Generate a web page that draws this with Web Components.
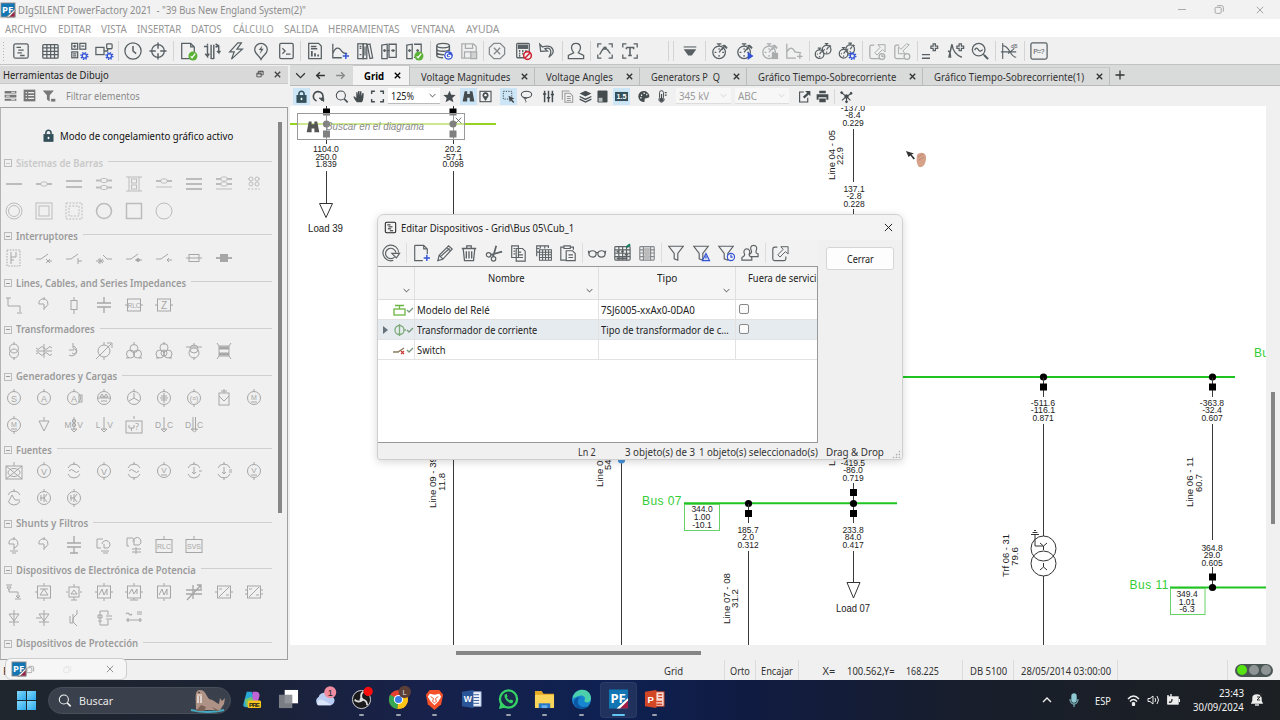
<!DOCTYPE html>
<html lang="es">
<head>
<meta charset="utf-8">
<title>DIgSILENT PowerFactory 2021</title>
<style>
html, body { margin: 0; height: 100%; overflow: hidden; }
body { font-family: "Noto Sans", "Open Sans", sans-serif; font-size: 11px; color: #222; }
</style>
</head>
<body>
<pf-window></pf-window>
<script>
const BLUE = "#3354d6";
const GREEN = "#5cb236";
const RED = "#cf2334";

const gear = `<circle cx="16" cy="15.500" r="2.400" stroke="${BLUE}" stroke-width="1.500"/><circle cx="16" cy="15.500" r="3.800" stroke="${BLUE}" stroke-width="1.500" stroke-dasharray="1.500 1.480"/>`;
const okBadge = `<circle cx="15.500" cy="15.500" r="5" fill="${GREEN}" stroke="none"/><path d="M13 16l1.500 1.500 3.500-4.500" stroke="#fff" stroke-width="1.400"/>`;
const plusBlue = `<path d="M16.500 12v7M13 15.500h7" stroke="${BLUE}" stroke-width="1.600"/>`;
const stopwatch = `<circle cx="9" cy="11.500" r="7"/><path d="M9 4.500V2M6.500 2h5M9 11.500l3-4M9 7v1.500M9 14.500v2M4 11.500h2M12.500 11.500h2"/><path d="M10.500 3.500c3 0 5 2 6.500 4.500l1.500-2-3-3z" fill="currentColor" stroke="none"/><path d="M12 8.500l3.500-4.500" stroke-width="1.800"/>`;
const miniWatch = (x, y) => `<circle cx="${x}" cy="${y}" r="4.800"/><path d="M${x} ${y}l2.200-3M${x} ${y - 4.8}v-1.800M${x - 2} ${y - 6.8}h4M${x + 3} ${y - 5}l2 1.500M${x - 3} ${y}h1M${x} ${y + 2}v1.500"/>`;
const table = `<rect x="2" y="3" width="17" height="15" rx="1"/><path d="M2 6.500h17M2 10.300h17M2 14h17M6.500 3v15M10.700 3v15M15 3v15"/>`;
const exportArrow = `<path d="M7 3.500H4Q2 3.500 2 6v10.500q0 2 2 2h10.500q2 0 2-2V14"/><path d="M7.500 12l6-6-2.500-3h8v8l-3-2.500-6 6z" stroke-width="1.100"/>`;
const funnel = `<path d="M2 2.500h16L12 10.500v7.500l-4-1.500v-6z"/>`;
const pfLogo = `<rect width="20" height="20" fill="#1276b4"/><path d="M20 10v10H9z" fill="#a01c46"/><path d="M20 9v2.500L11.500 20H8z" fill="#fff"/><text x="9.600" y="13.700" font-size="13" font-weight="700" fill="#fff" stroke="none" text-anchor="middle" textLength="16" lengthAdjust="spacingAndGlyphs" font-family="Noto Sans">PF</text>`;

// 20x20 drawings
const ICONS = {
  pf: pfLogo,
  form: `<rect x="2" y="2" width="16" height="16" rx="2"/><path d="M5 6h5M7 9h6M6 12h5M9 15h5" stroke-width="1.500"/>`,
  table,
  calcgear: `<rect x="2" y="1.500" width="6.500" height="6.500"/><rect x="11" y="1.500" width="6.500" height="6.500"/><rect x="2" y="11" width="6.500" height="6.500"/><path d="M3.500 4.700h3.500M5.200 3v3.500M12.500 4.700h3.500M3.500 13.300h3.500M3.500 15.300h3.500"/>${gear}`,
  shapegear: `<rect x="1" y="6" width="9" height="8"/><rect x="13" y="2" width="6" height="5.500" rx="1"/><path d="M10 10h4v-2.500"/>${gear}`,
  clock: `<circle cx="10" cy="10" r="9"/><path d="M10 4.500V10l3.500 3" stroke-width="1.700"/>`,
  target: `<circle cx="10" cy="10" r="7"/><path d="M10 .500v7M10 12.500v7M.500 10h7M12.500 10h7" stroke-width="1.600"/>`,
  doccheck: `<path d="M3 1.500h10l4 4V18.500H3zM13 1.500v4h4"/>${okBadge}`,
  arrows: `<path d="M1 5h4v11l-2.500-3M5 16l2-3M9 3v16M12 3v16M9 18.500h3M14 5h3.500v7l-2-2M17.500 12l2-2M5 4v-2M14 2l3 2-3 2" stroke-width="1.600"/>`,
  bolt: `<path d="M12 1L3 11h5l-3 8L17 8h-6l5-7z"/>`,
  bulb: `<path d="M10 19.500C8 15 3 13 3 8.500a7 7 0 0 1 14 0C17 13 12 15 10 19.500z"/><path d="M11.500 4l-4 5h2.500l-1.500 4.500 4.500-6h-2.500z" fill="currentColor" stroke="none"/>`,
  terminal: `<rect x="3" y="1.500" width="15" height="17" rx="1.500"/><path d="M6 7l3 3-3 3M10 13.500h5"/>`,
  report: `<path d="M3 1.500h11l3 3v14H3z"/><path d="M5.500 5h6M5.500 7.500h7" /><path d="M6.500 16v-6M10 16v-3.500M13.500 16v-2" stroke-width="2"/>`,
  chartplus: `<path d="M2 2v15.500h10M2 13C5 5 9 6 11 9s4 4 7 4"/>${plusBlue}`,
  books: `<rect x="2" y="2" width="6" height="16.500"/><rect x="8" y="2" width="4" height="16.500"/><path d="M12.500 3l3-.800 3 15.500-3 .700zM4 5h2M4 7h2M4 14h2M10 5v10"/>`,
  compare: `<path d="M2 3.500l6-1v16H2zM10 2.500h8V17h-8zM8 9.500h3M5 8v3M14.500 8v3" /><path d="M3.500 9.500H7M12.500 9.500h4" stroke-width="1.600"/>`,
  comparecheck: `<path d="M2 3.500l6-1v16H2zM10 2.500h8V17h-8M5 8v3M14 8v3"/><path d="M3.500 9.500H7M12.500 9.500h3" stroke-width="1.600"/>${okBadge}`,
  db: `<ellipse cx="9" cy="4" rx="7" ry="2.600"/><path d="M2 4v11c0 1.500 3 2.600 7 2.600M16 4v6M2 7.800c0 3.300 14 3.300 14 0M2 11.500c0 2 5 3 8 2.500" stroke-width="1.600"/><circle cx="15" cy="15" r="4.800" fill="${BLUE}" stroke="none"/><path d="M15 12.300a2.700 2.700 0 1 0 2.700 2.700M14.500 15h3" stroke="#fff"/>`,
  save: `<path d="M2 2h13l3 3v13H2zM6 2v5h8V2M5 18v-7h8"/><rect x="12" y="11" width="6.500" height="7.500" fill="#d2d2d2"/>`,
  xoct: `<path d="M6.500 1.500h7l5 5v7l-5 5h-7l-5-5v-7z"/><path d="M6.500 6.500l7 7M13.500 6.500l-7 7" stroke-width="1.500"/>`,
  calcno: `<rect x="3" y="1.500" width="14" height="16" rx="1"/><rect x="5" y="3.500" width="10" height="3.500" fill="currentColor"/><path d="M5.500 10h1.500M9 10h1.500M12.500 10h1.500M5.500 13h1.500M9 13h1.500M5.500 15.500h1.500" stroke-width="2"/><circle cx="15" cy="15" r="4.300" stroke="${RED}" stroke-width="1.700" fill="#f0f0f0"/><path d="M12 18l6-6" stroke="${RED}" stroke-width="1.700"/>`,
  undo: `<path d="M2 2.500l1 8 7.500-.500-3-2.500c6-3 9 3 4.500 9.500 9-6 4.500-15-7-11.500z"/>`,
  user: `<path d="M10 1.500c-3 0-5 2-5 5 0 2.500 1.300 4 2.500 5.500L1.500 15v3.500h17V15l-6-3C13.700 10.500 15 9 15 6.500c0-3-2-5-5-5z"/>`,
  framepoly: `<path d="M2 6V2h4M14 2h4v4M18 14v4h-4M6 18H2v-4"/><path d="M4 14l3.500-6L10 6l2.500 2.500L16 13" /><path d="M9 6h2v2H9zM7 9h1M13 9h1"/>`,
  frametext: `<path d="M2 6V2h4M14 2h4v4M18 14v4h-4M6 18H2v-4"/><path d="M6 6h8v2M6 6v2M10 6v9M8 15h4" stroke-width="1.700"/>`,
  dropdown: `<path d="M3 5.500h14" stroke-width="1.200"/><path d="M3 8h14l-5 7H8z" fill="currentColor" stroke="none"/>`,
  stopwatch,
  watchplay: `${stopwatch}<path d="M13 11l6.500 4.500L13 20z" fill="${BLUE}" stroke="none"/>`,
  watchstop: `${stopwatch}<rect x="12" y="12" width="7" height="7" fill="currentColor" stroke="none"/>`,
  chartgray: `<path d="M2 2v16h10M2 11c3-5 6-6 9 0l7 1M16.500 13v6M13.500 16h6"/>`,
  watches: `${miniWatch(6.2, 13.5)}${miniWatch(14, 8.5)}`,
  watchgear: `${miniWatch(6.2, 13)}${miniWatch(13.5, 8)}${gear}`,
  exportclock: `${exportArrow}<circle cx="15.500" cy="16" r="3.200" fill="#f0f0f0"/><path d="M15.500 14v2h2"/>`,
  importclock: `<path d="M7 3.500H4Q2 3.500 2 6v10.500q0 2 2 2h8"/><path d="M18 3l-7 7 2.500 3H6V5.500L9 8l6-6z" stroke-width="1.100"/><circle cx="15.500" cy="16" r="3.200" fill="#f0f0f0"/>`,
  eqplus: `<path d="M1 14h9M1 18h9" stroke-width="1.600"/><path d="M13.500 2H16v2.500h2.500V7H16v2.500h-2.500V7H11V4.500h2.500z"/>`,
  curveplus: `<path d="M2 17.500L5.500 2.500c1 7 4 12 11 14.500M1 10c3 0 3 4 3 7.500" stroke-width="1.600"/><path d="M13.500 2H16v2.500h2.500V7H16v2.500h-2.500V7H11V4.500h2.500z"/>`,
  magwave: `<circle cx="8.500" cy="8.500" r="7"/><path d="M4 9c2-4 3-2 4.500 0s3 1 4.500-.500M13.500 13.500l5 5"/><path d="M14.500 14.500l4.500 4.500" stroke-width="2.200"/>`,
  curve: `<path d="M3 1v18M1 11h17M3 4c8 0 8 13 15 13M9 13l7-6" stroke-width="1.200"/><text x="12" y="6.500" font-size="6" stroke="none" fill="currentColor" font-family="Noto Sans">dB</text>`,
  pq: `<rect x="1" y="1" width="18" height="18" rx="2"/><text x="10" y="13" font-size="8.500" text-anchor="middle" textLength="13" stroke="none" fill="currentColor" font-family="Liberation Mono">P=?</text>`,
  refresh: `<path d="M12.500 18.200a8.700 8.700 0 1 1 6-8.700M14 14.500a5.800 5.800 0 1 1 1.500-5"/><path d="M11 10.500h8.500L16 15.500z"/>`,
  newdoc: `<path d="M3 1.500h10l4 4V11M3 1.500v17h9M13 1.500v4h4"/>${plusBlue}`,
  pencil: `<path d="M2 18.500l1.500-6L14 2l4 3.500L7.500 17zM12 4l4 3.500M3.500 12.500l4 4M5 14L15 5"/>`,
  trash: `<path d="M2 5h16M7.500 5V2h5v3M3.500 5L5 18.500h10L16.500 5" stroke-width="1.400"/><path d="M7 8v8M10 8v8M13 8v8" stroke-width="1.500"/>`,
  cut: `<circle cx="4" cy="12" r="2.500"/><circle cx="9.500" cy="16.500" r="2.500"/><path d="M6.500 12L19 8.500M9 14L12.500 2" stroke-width="1.900"/>`,
  copy: `<path d="M3 2h7.500v13H3zM8 5h7l3 3v11H8z" fill="#f3f3f3"/><path d="M5 5h2M5 8h2M5 11h2M10.500 9h3M10.500 12h5M10.500 15h5"/>`,
  copytable: `<path d="M3 13.500V2h13v2.500M3 5h3M7 2v3M12 2v3M3 9h3"/><g transform="translate(4.500 4) scale(.78)"><path d="M2 3h17v15H2zM2 6.500h17M2 10.300h17M2 14h17M6.500 3v15M10.700 3v15M15 3v15" stroke-width="1.500"/></g>`,
  paste: `<path d="M8 18H2V3.500h3M13 3.500h3v3M5.500 2h7v3h-7zM8 7.500h7l3 3v8H8zM10.500 12h5M10.500 15h5"/>`,
  glasses: `<ellipse cx="5" cy="11" rx="4" ry="3.500"/><ellipse cx="15" cy="11" rx="4" ry="3.500"/><path d="M9 10c.700-.700 1.300-.700 2 0M1 10.500L.500 7.500M19 10.500l.500-3" stroke-width="1.600"/>`,
  tablegreen: `${table}<path d="M4 8.500h3M9 8.500h3M13 12h4M4 16h12" stroke-width="1.800"/><path d="M15 3.500l4-3" stroke="#168065" stroke-width="2.400"/>`,
  tablegray: `<rect x="2" y="3" width="16" height="15" rx="1"/><path d="M2 6.500h16M2 10h16M2 14h16M6 3v15M14 3v15"/><rect x="7" y="4" width="6" height="13" fill="#bbb" stroke="none"/>`,
  funnel,
  funnelwarn: `${funnel}<path d="M15.500 10.500l-4 8h8z" stroke="${BLUE}" fill="#dfe3f6"/><path d="M15.500 13v3" stroke="${BLUE}"/>`,
  funnelclock: `${funnel}<circle cx="15.500" cy="14.500" r="4" fill="#f3f3f3" stroke="${BLUE}"/><path d="M15.500 12v2.500h2" stroke="${BLUE}"/>`,
  users: `<path d="M14 1.500c-3 0-4 3-2.500 6 .700 2-.500 3-2 3.500V14h9.500v-3c-2-.700-3-1.500-2-4 1-3 0-5.500-3-5.500z"/><path d="M6.500 5.500c-3 0-4 3-2.500 6 .600 1.500-.500 2-3 3.500v3h11v-3c-2.500-1.500-3.500-2-3-3.500 1.500-3 .500-6-2.500-6z" fill="#f3f3f3"/>`,
  export: exportArrow,
  // view toolbar
  lock: `<rect x="3" y="8.500" width="14" height="10.500" fill="#34505a" stroke="#34505a"/><path d="M6 8.500V6a4 4 0 0 1 8 0v2.500" stroke="#34505a" stroke-width="2.400"/><path d="M10 12v3.500" stroke="#fff" stroke-width="2.500"/>`,
  reload: `<path d="M7 17A7.500 7.500 0 1 1 14 16" stroke-width="2.500"/><path d="M11 12.500h7v5z" fill="currentColor"/>`,
  mag: `<circle cx="9" cy="8.500" r="7" stroke-width="1.600"/><path d="M14 13.500l5.500 5.500" stroke-width="2.600"/>`,
  hand: `<path d="M6 19c-3-3-4-6-5.500-8.500 1.500-1 3 0 4.500 2V3.500h2V9l1-7.500h2V9l1-7h2v7.500l1.500-5 2 .500c-.500 7-.500 12-3 14z" fill="currentColor" stroke="none"/>`,
  fit: `<path d="M1 6V2h5M14 2h5v4M19 14v4h-5M6 18H1v-4" stroke-width="2.200"/>`,
  star: `<path d="M10 1l2.700 6.200 6.800.600-5.200 4.400 1.700 6.600-6-3.600-6 3.600 1.700-6.600L.500 7.800l6.800-.600z" fill="currentColor" stroke="none"/>`,
  binoc: `<path d="M4 2h4v4h4V2h4l3 15.500h-7V12H8v5.500H1z" fill="currentColor" stroke="none"/>`,
  map: `<rect x="1.500" y="2" width="17" height="16" stroke-width="1.600"/><path d="M10 16c-2-4-4-5-4-8a4 4 0 0 1 8 0c0 3-2 4-4 8z" fill="currentColor"/><circle cx="10" cy="8" r="1.800" fill="#fff" stroke="none"/>`,
  select: `<rect x="2" y="2" width="13" height="12" stroke-dasharray="2 1.800" stroke-width="1.500"/><path d="M10 9l9 4-3.500 1.500 3.500 4-1.500 1.500-4-4L12 19z" fill="currentColor" stroke="none"/>`,
  lasso: `<ellipse cx="10" cy="7" rx="8" ry="5" stroke-width="1.600"/><path d="M5 11c-1 2 4 3 5 2s-3-1-2 2 2 3 1 4" stroke-width="1.400"/>`,
  sliders: `<path d="M4 1v18M10 1v18M16 1v18M1.500 6h5M7.500 12h5M13.500 7h5" stroke-width="2.300"/>`,
  docs: `<path d="M2 5V1.500h11M2 5v10" stroke-width="1.600"/><path d="M6 5h8l4 4v10H6zM9 10h6M9 13h6M9 16h6" stroke-width="1.600"/>`,
  layers: `<path d="M10 1l9 4.500-9 4.500-9-4.500z" fill="currentColor" stroke="none"/><path d="M1 10l9 4.500 9-4.500M1 14l9 4.500 9-4.500" stroke-width="2"/>`,
  square: `<path d="M3 1.500h14v17H3z" fill="currentColor"/><path d="M4 12h6v6H4z" fill="#b9bec1" stroke="none"/>`,
  num: `<rect x="0" y="3" width="20" height="14" fill="#34505a" stroke="none"/><text x="10" y="14" font-size="11" font-weight="700" fill="#fff" stroke="none" text-anchor="middle" font-family="Liberation Sans">1.5</text>`,
  palette: `<path d="M11 1.500a8.500 8.500 0 1 0-1 17c3 0 1-3 2-5s7 0 7-4-4-8-8-8z" fill="currentColor" stroke="none"/><path d="M6 8h2M10 5h2M14 7h2M5 12h2" stroke="#f0f0f0" stroke-width="2.300"/>`,
  thermo: `<path d="M7 12V4a3 3 0 0 1 6 0v8a4 4 0 1 1-6 0z" stroke-width="1.500"/><path d="M10 6v9M15 4h3M15 8h3" stroke-width="1.800"/><circle cx="10" cy="15" r="2.500" fill="currentColor"/>`,
  exportsm: `<path d="M9 3H2.500v15.500H15V12" stroke-width="1.700"/><path d="M11 1.500h8v8l-2.500-2.500L10 13 7.500 10.500 14 4.500z" fill="currentColor" stroke="none"/>`,
  printer: `<path d="M5 1h10v4H5zM1 6.500h18V15h-3v-4H4v4H1zM5 13h10v6H5z" fill="currentColor" stroke="none"/>`,
  net: `<path d="M10 10L2 4M10 10l8-5M10 10v9M10 10l-7 6M10 10l6 6" stroke-width="1.700"/><circle cx="10" cy="10" r="2.600" fill="currentColor"/><circle cx="2.500" cy="4" r="1.500" fill="currentColor"/><circle cx="17" cy="5" r="1.500" fill="currentColor"/><circle cx="10" cy="18" r="1.500" fill="currentColor"/>`,
  down: `<path d="M2 6l8 8 8-8" stroke-width="2.200"/>`,
  back: `<path d="M18 10H3M9 4l-6 6 6 6" stroke-width="2.500"/>`,
  fwd: `<path d="M2 10h15M11 4l6 6-6 6" stroke-width="2.500"/>`,
  close: `<path d="M4 4l12 12M16 4L4 16" stroke-width="3"/>`,
  thinx: `<path d="M2 2l16 16M18 2L2 18" stroke-width="2.200"/>`,
  add: `<path d="M10 1v18M1 10h18" stroke-width="2.600"/>`,
  restore: `<rect x="2" y="6" width="11" height="11" rx="2" stroke-width="1.500"/><path d="M6 3h8q3 0 3 3v8" stroke-width="1.500"/>`,
  undock: `<path d="M2 8h11v9H2zM6 8V3h12v9h-5M2 10h11M6 4.500h12" stroke-width="2"/>`,
  rows: `<path d="M1 3h18v4H1zM1 9h18v4H1zM1 15h18v3H1z" fill="currentColor" stroke="none"/><path d="M11 5h6M3 11h6M11 16.500h6" stroke="#eee" stroke-width="1.500"/>`,
  list: `<path d="M1 1h18v18H1z" fill="currentColor" stroke="none"/><path d="M4 5.500h2M8 5.500h9M4 10h2M8 10h9M4 14.500h2M8 14.500h9" stroke="#eee" stroke-width="1.800"/>`,
  filter: `<path d="M1 2h16L11 9v9l-4-3V9z" fill="currentColor" stroke="none"/><path d="M13 14h6v4h-6z" fill="currentColor" stroke="none"/>`
};

// 18x18 palette symbols
const lead = `<path d="M9 0v3"/>`;
const disc = (inner, both) => `${lead}<circle cx="9" cy="9" r="6.500"/>${both ? '<path d="M9 15v3"/>' : ""}${inner}`;
const chr = (s, y = 12.5, size = 9, x = 9) => `<text x="${x}" y="${y}" font-size="${size}" text-anchor="middle" stroke="none" fill="currentColor" font-family="Liberation Sans">${s}</text>`;
const sides = (a, b) => chr(a, 11.5, 8.5, 3) + chr(b, 11.5, 8.5, 15);
const boxed = (inner) => `<rect x="2.500" y="3" width="13" height="12"/>${inner}`;
const arcs = (inner) => `${lead}<path d="M3 6a6.500 6.500 0 0 1 12 0M3 12a6.500 6.500 0 0 0 12 0"/>${inner}`;
const coil = (x = 0) => `<path d="M${9 + x} 1v3M${4 + x} 8a4.500 4.500 0 1 1 7 3l-2 1M${4 + x} 8h5v6"/>`;
const earth = `<path d="M5 15h8M7 17h4"/>`;
const busbar = (ys, dots) => ys.map((y) => `<path d="M1 ${y}h16" stroke-width="2"/>`).join("") + dots.map((y) => `<rect x="6" y="${y - 2}" width="6" height="4" rx="1.500" fill="#f0f0f0"/>`).join("");
const PALETTE = [
  { title: "Sistemas de Barras", w: 87, faint: true, rows: [
    [busbar([9], []), busbar([9], [9]), busbar([6, 12], []), busbar([5.5, 12.5], [5.5, 12.5]),
      `<path d="M1 2h16M1 16h16M4 2v14M14 2v14"/><rect x="6.500" y="4" width="5" height="4"/><rect x="6.500" y="10" width="5" height="4"/>`,
      busbar([6], [6]) + `<path d="M1 12h16"/>`, busbar([4, 9, 14], []), busbar([4, 9], [4, 9]) + `<path d="M1 14h16"/>`,
      `<circle cx="6" cy="4" r="2"/><circle cx="12" cy="4" r="2"/><circle cx="6" cy="9" r="2"/><circle cx="12" cy="9" r="2"/><path d="M3 4h1M14 4h1M3 14h12" stroke-dasharray="2 1.500"/>`],
    [`<circle cx="9" cy="9" r="8"/><circle cx="9" cy="9" r="5.500"/>`, `<rect x="1" y="1" width="16" height="16"/><rect x="4" y="4" width="10" height="10"/>`,
      `<rect x="1" y="1" width="16" height="16" stroke-dasharray="2 1.300"/><rect x="4" y="4" width="10" height="10" stroke-dasharray="2 1.300"/>`,
      `<circle cx="9" cy="9" r="7.500" stroke-width="1.600"/>`, `<rect x="1.500" y="1.500" width="15" height="15" stroke-width="1.500"/>`, `<circle cx="9" cy="9" r="8"/>`]] },
  { title: "Interruptores", w: 62, rows: [[
    `<rect x="2" y="1" width="13" height="16" stroke-dasharray="1.500 1.300"/><path d="M6 3v12M6 8h5V3M6 11h3"/>`,
    `<path d="M1 10h5l7-5M11 10l4 4M15 10l-4 4M13 12h4"/>`, `<path d="M1 10h5l7-5M13 9v6M13 12h4"/>`,
    `<path d="M1 12h8M5 9v6M3 10l5 4M8 10l-5 4M8 6l4 4h5"/>`, `<path d="M1 10h5l7-5M10 11h7"/><circle cx="13" cy="11" r="1.500" fill="currentColor"/>`,
    `<path d="M1 10h5l7-5M12 11h5M14 9l-2 2 2 2"/>`, `<rect x="4" y="5.500" width="10" height="7"/><path d="M1 9h16"/>`,
    `<rect x="5.500" y="5.500" width="7" height="7" fill="currentColor"/><path d="M1 9h16" stroke-width="1.800"/>`]] },
  { title: "Lines, Cables, and Series Impedances", w: 170, rows: [[
    `<path d="M1 2h5M3 2v8h12v6M12 17h5"/>`, coil(), `<path d="M9 1v4M9 14v4"/><rect x="6" y="4.500" width="6" height="9"/>`,
    `<path d="M9 1v6M9 11v6M2 7h14M2 11h14" stroke-width="1.300"/>`, boxed(chr("RLC", 11.5, 6.5)) + `<path d="M0 9h2M16 9h2"/>`, boxed(chr("Z", 12.5, 10)) + `<path d="M0 9h2M16 9h2"/>`]] },
  { title: "Transformadores", w: 79, rows: [[
    `<path d="M9 0v3M9 15v3"/><circle cx="9" cy="6.500" r="4.500"/><circle cx="9" cy="11.500" r="4.500"/>`,
    `<path d="M1 6q2 3 4 0t4 0 4 0 4 0M1 12q2-3 4 0t4 0 4 0 4 0M1 9h16M9 2v14"/>`, `<path d="M8 1v5M4 8h5M8 4a5 5 0 1 1-4 9M8 7a2.500 2.500 0 1 1-1 4"/>`,
    `<circle cx="9" cy="9" r="6"/><path d="M1 17L16 2M12 1h5v5M9 0v3M9 15v3"/>`,
    `<path d="M9 0v3M1 16h3M14 16h3"/><circle cx="9" cy="6.500" r="4"/><circle cx="5.500" cy="12" r="4"/><circle cx="12.500" cy="12" r="4"/>`,
    `<path d="M9 0v3M1 16h3M14 16h3"/><circle cx="9" cy="5.500" r="4"/><circle cx="5" cy="12" r="4"/><circle cx="13" cy="12" r="4"/><circle cx="9" cy="11" r="3"/>`,
    `<path d="M1 5h16M9 15v3M9 1v3"/><circle cx="9" cy="7" r="4"/><circle cx="9" cy="11" r="5"/>`,
    `<path d="M2 1l2 3h10l2-3M2 17l2-3h10l2 3M4 4v10M14 4v10"/><path d="M4 6h10M4 12h10" stroke-width="3"/>`]] },
  { title: "Generadores y Cargas", w: 101, rows: [
    [disc(chr("S")), disc(chr("A")), disc(chr("A"), false) + `<rect x="14" y="6" width="3" height="7"/>`,
      disc(`<path d="M2.500 9h13M5 8l2-3 2 3zM9 8l2-3 2 3zM6 12h6"/>`), disc(`<path d="M9 4v5l-5 3M9 9l5 3"/>`),
      disc(`<path d="M5 9h8M6 7h6M6 11h6M9 4v10"/>`, true), disc(chr("(≡)", 12, 7), true),
      `<rect x="4" y="4" width="10" height="12"/><path d="M4 7l5 5 5-5M9 0v4M6 2h6"/>`, disc(chr("M", 11, 7) + `<path d="M6 13h6"/>`)],
    [disc(chr("M", 11, 7) + `<path d="M6 13h6"/>`, true), `<path d="M9 1v4M4 5h10L9 15z"/>`,
      `${sides("M", "V")}<path d="M9 1v13M6 13h6l-3 3z"/><circle cx="9" cy="5" r="1.700"/><circle cx="9" cy="9" r="1.700"/>`, `${sides("L", "V")}<path d="M9 1v13M6 13h6l-3 3z"/>`,
      `<rect x="1" y="5" width="16" height="12"/>${lead}<path d="M4 9v3h5V9M6.500 12v3"/><text x="10" y="14" font-size="9" stroke="none" fill="currentColor">?</text>`,
      `${sides("D", "C")}<path d="M9 1v13M6 13h6l-3 3z"/>`, `${sides("D", "C")}<path d="M8 1v13M10.500 1v13M6 13h6.500l-3 3z"/>`]] },
  { title: "Fuentes", w: 36, rows: [
    [`<rect x="1" y="4" width="16" height="13"/><path d="M1 4l16 13M17 4L1 17M9 0v4"/><ellipse cx="9" cy="10.500" rx="6" ry="4"/>`,
      disc(chr("V")), arcs(`<path d="M4 9q2.500-3 5 0t5 0"/>`), disc(chr("V"), true), arcs(`<path d="M4 9q2.500-3 5 0t5 0"/>`) + `<path d="M9 15v3"/>`,
      disc(chr("V", 11, 8) + `<path d="M6 13h6"/>`), arcs(`<path d="M9 5v7M7 10l2 2 2-2M14 9h3"/>`), arcs(`<path d="M9 5v7M7 10l2 2 2-2M14 8h3M14 10h3M9 15v3"/>`), disc(chr("V", 11, 8) + `<path d="M6 13h6"/>`, true)],
    [arcs(`<path d="M4 12l3-6 3 5h5"/>`), disc(`<path d="M5 9h4M9 5v8M12 5L9 9l3 4M6 6v6"/>`), disc(`<path d="M5 9h4M9 5v8M12 5L9 9l3 4M6 6v6"/>`, true)]] },
  { title: "Shunts y Filtros", w: 72, rows: [[
    coil() + earth, coil(), `<path d="M9 0v7M9 11v6M2 7h14M2 11h14M5 17h8" stroke-width="1.300"/>`,
    `<path d="M8 3H2v9h4M7 8a4 4 0 1 1 6 4h-4V8M6 15h8M8 17h5"/>`, `<path d="M8 2H2v8h2M8 6a4 4 0 1 1 6 3H9V2M7 13h9M7 16h9M11 11v7"/>`,
    `${lead}<rect x="1" y="3.500" width="16" height="13"/>${chr("RLC", 12.5, 7)}`, `${lead}<rect x="1" y="3.500" width="16" height="13"/>${chr("SVS", 12.5, 7)}`]] },
  { title: "Dispositivos de Electrónica de Potencia", w: 180, rows: [
    [`<path d="M1 2h6M2 4l2 3 2-3zM4 7v2h9v3M11 13h4l-2 2zM10 16h6"/>`, boxed(`<path d="M5 12h8L9 6zM5 6h8M9 0v3M9 15v3M0 9h2"/>`),
      `<rect x="4" y="4" width="10" height="10"/><path d="M6 11h6L9 7zM9 1v3M9 14v3M6 17h6M1 9h2M15 9h2"/>`,
      boxed(`<path d="M4 12l3-6 2 6 3-6v6M9 0v3M9 15v3M0 9h2M16 9h2"/>`), boxed(`<path d="M4 11l3-5 2 5 3-5v5M9 15v2M5 17h8M9 0v3M0 9h2M16 9h2"/>`),
      boxed(`<path d="M4 12l3-6 2 6 3-6v6M9 0v3M9 15v3"/>`), `<path d="M1 7h16M1 11h16M2 17L16 2M12 2h4v4M8 2v14" stroke-width="1.300"/>`,
      boxed(`<path d="M4 14L14 4M4 6h3M11 12h3M0 9h2M16 9h2"/>`), boxed(`<path d="M4 14L14 4M4 6h3M11 12h3M0 7h2M16 7h2M0 11h2M16 11h2"/>`)],
    [`<path d="M9 1v16M4 5h10L9 12zM4 13h10"/>`, `<path d="M9 1v16M4 5h10L9 12zM4 13h10M1 9h5"/>`, `<path d="M12 1v4l-4 4v4l4 4M8 5v9M5 7v7h3"/>`,
      `<path d="M5 2h8v4M5 2v14h8v-5M11 7h6M11 10h6M3 6h4v3H3zM3 12h4"/>`, `<path d="M1 11h16M3 9v4M15 9v4M1 5q2-2 3 0t3 0M12 5h5M12 3h5" stroke-width="1.200"/>`]] },
  { title: "Dispositivos de Protección", w: 122, rows: [[]] }
];

class UiText extends HTMLElement {
  constructor() {
    super();
    this.attachShadow({ mode: "open" }).innerHTML = `<style>
        :host { display: inline-block; white-space: pre; line-height: 15px; height: 15px; flex: none; }
        span { display: inline-block; transform-origin: 0 50%; }
      </style><span><slot></slot></span>`;
  }
  // condenses the label so that it is "w" pixels wide
  connectedCallback() {
    const w = Number(this.getAttribute("w"));
    if (!w) return;
    const span = this.shadowRoot.querySelector("span");
    const k = w / span.offsetWidth;
    span.style.transform = `scaleX(${k.toFixed(4)})`;
    this.style.width = `${w}px`;
  }
}
customElements.define("ui-text", UiText);

class PfIcon extends HTMLElement {
  connectedCallback() {
    if (this.shadowRoot) return;
    const size = this.getAttribute("size") || 20;
    const sw = this.getAttribute("sw") || 1.3;
    this.attachShadow({ mode: "open" }).innerHTML = `
      <style>
        :host { display: inline-flex; flex: none; width: ${size}px; height: ${size}px; }
        svg { overflow: visible; display: block; }
      </style>
      <svg width="${size}" height="${size}" viewBox="0 0 20 20" fill="none" stroke="currentColor" stroke-width="${sw}">${ICONS[this.getAttribute("name")]}</svg>`;
  }
}
customElements.define("pf-icon", PfIcon);

// Row of icons spaced by their centres. Items: [name, centre, class], "|" is a separator
function strip(items, size, start, sw = 1.3) {
  let end = start;
  return items.map(([name, cx, cls = ""]) => {
    const w = name === "|" ? 1 : size;
    const gap = cx - w / 2 - end;
    end = cx + w / 2;
    if (name === "|") return `<i style="margin-left:${gap}px"></i>`;
    return `<pf-icon name="${name}" size="${size}" sw="${sw}" class="${cls}" style="margin-left:${gap}px"></pf-icon>`;
  }).join("");
}

class PfTitlebar extends HTMLElement {
  connectedCallback() {
    const menus = [["ARCHIVO", 42], ["EDITAR", 33], ["VISTA", 26], ["INSERTAR", 44], ["DATOS", 31], ["CÁLCULO", 41], ["SALIDA", 34], ["HERRAMIENTAS", 72], ["VENTANA", 44], ["AYUDA", 33]];
    const gaps = [5, 11, 10, 10, 10, 11, 10, 10, 11, 11];
    this.attachShadow({ mode: "open" }).innerHTML = `
      <style>
        :host { display: block; color: #8c8c8c; }
        .title { height: 19px; background: #f2f2f2; display: flex; align-items: center; padding-left: 1px; box-sizing: border-box; }
        .title pf-icon { margin-right: 3px; }
        .sys { margin-left: auto; display: flex; align-items: center; gap: 28px; padding-right: 13px; color: #9a9a9a; }
        .sys b { width: 8px; height: 1px; background: #aaa; }
        .menu { height: 18px; background: #fff; display: flex; align-items: center; color: #969696; }
      </style>
      <div class="title"><pf-icon name="pf" size="14"></pf-icon><ui-text w="288">DIgSILENT PowerFactory 2021  - "39 Bus New England System(2)"</ui-text>
        <div class="sys"><b></b><pf-icon name="restore" size="11" sw="1.600"></pf-icon><pf-icon name="thinx" size="8"></pf-icon></div>
      </div>
      <div class="menu">${menus.map(([t, w], i) => `<ui-text w="${w}" style="margin-left:${gaps[i]}px">${t}</ui-text>`).join("")}</div>`;
  }
}
customElements.define("pf-titlebar", PfTitlebar);

class PfToolbar extends HTMLElement {
  connectedCallback() {
    const items = [["form", 20.5], ["table", 50], ["calcgear", 78.5], ["shapegear", 103.5], ["|", 118], ["clock", 133], ["target", 158], ["|", 173], ["doccheck", 188], ["arrows", 212], ["bolt", 236], ["bulb", 261], ["terminal", 285.5], ["|", 300.5], ["report", 315], ["chartplus", 340], ["books", 364.5], ["compare", 389], ["comparecheck", 414], ["|", 430], ["db", 444], ["save", 468.5, "off"], ["|", 483], ["xoct", 497, "mid"], ["calcno", 523], ["undo", 546.5], ["|", 562], ["user", 576], ["|", 590], ["framepoly", 605], ["frametext", 630], ["|", 668], ["|", 673], ["dropdown", 690], ["|", 705], ["stopwatch", 720], ["watchplay", 745], ["watchstop", 770, "off"], ["chartgray", 794, "off"], ["|", 809], ["watches", 822.5], ["watchgear", 847], ["|", 862], ["exportclock", 877, "off"], ["importclock", 902, "off"], ["|", 917], ["eqplus", 930], ["curveplus", 956], ["magwave", 980], ["|", 995], ["curve", 1009], ["|", 1024], ["pq", 1038.5]];
    this.attachShadow({ mode: "open" }).innerHTML = `
      <style>
        :host { display: flex; align-items: center; height: 28px; background: #f0f0f0; color: #586064; border-bottom: 1px solid #c3c3c3; box-sizing: border-box; }
        .grip { width: 4px; margin-left: 2px; height: 20px; background: radial-gradient(#b5b5b5 0.7px, transparent 1px) 0 0 / 3px 3px; }
        i { width: 1px; height: 20px; background: #d4d4d4; flex: none; }
        .off { color: #a9acad; }
        .mid { color: #85898b; }
      </style>
      <div class="grip"></div>${strip(items, 18, 6, 1.4)}`;
  }
}
customElements.define("pf-toolbar", PfToolbar);

class PaletteSection extends HTMLElement {
  set data(s) {
    const row = (r) => `<div class="row">${r.map((g) => `<svg width="18" height="18" viewBox="0 0 18 18">${g}</svg>`).join("")}</div>`;
    this.attachShadow({ mode: "open" }).innerHTML = `
      <style>
        :host { display: block; color: ${s.faint ? "#c9c9c9" : "#9b9b9b"}; margin-bottom: 3.900px; }
        header { display: flex; align-items: center; height: 16px; font-weight: 600; font-size: 10.500px; }
        .box { width: 6px; height: 6px; border: 1px solid #bbb; margin: 0 4px 0 3px; display: flex; align-items: center; justify-content: center; }
        .box::before { content: ""; width: 4px; height: 1px; background: currentColor; }
        hr { flex: 1; border: 0; height: 1px; background: #cfcfcf; margin: 0 0 3px 5px; }
        .row { height: 26.800px; display: flex; align-items: center; gap: 12px; padding-left: 3.500px; }
        svg { fill: none; stroke: ${s.faint ? "#bcbcbc" : "#a6a6a6"}; color: #a6a6a6; stroke-width: 1; overflow: visible; flex: none; }
      </style>
      <header><span class="box"></span><ui-text w="${s.w}">${s.title}</ui-text><hr></header>
      ${s.rows.map(row).join("")}`;
  }
}
customElements.define("palette-section", PaletteSection);

class PfPalette extends HTMLElement {
  connectedCallback() {
    this.attachShadow({ mode: "open" }).innerHTML = `
      <style>
        :host { display: flex; flex-direction: column; width: 288px; height: 595px; background: #f0f0f0; }
        .head { height: 18px; margin-top: 1px; background: #d9d9d9; border-bottom: 1px solid #cacaca; box-sizing: border-box; display: flex; align-items: center; padding: 0 6px 0 3px; color: #222; }
        .tools { margin-left: auto; display: flex; gap: 9px; color: #444; }
        .filter { height: 23px; display: flex; align-items: center; padding-left: 4px; gap: 6px; color: #777; }
        .filter ui-text { margin-left: 4px; color: #8a8a8a; }
        .list { flex: 1; overflow: hidden; border: 1px solid #9f9f9f; border-left-color: #b4b4b4; display: flex; position: relative; min-height: 0; }
        .body { width: 271px; padding-top: 17px; box-sizing: border-box; }
        .lock { height: 20px; margin: 0 0 10px; padding-left: 41px; display: flex; align-items: center; gap: 5px; color: #111; }
        .bar { width: 4px; height: 391px; background: #868686; margin: 14px 0 0 6px; }
      </style>
      <div class="head"><ui-text w="106">Herramientas de Dibujo</ui-text><div class="tools"><pf-icon name="undock" size="8" sw="2"></pf-icon><pf-icon name="close" size="9"></pf-icon></div></div>
      <div class="filter"><pf-icon name="rows" size="13"></pf-icon><pf-icon name="list" size="13"></pf-icon><pf-icon name="filter" size="14"></pf-icon><ui-text w="74">Filtrar elementos</ui-text></div>
      <div class="list">
        <div class="body"><div class="lock"><pf-icon name="lock" size="13"></pf-icon><ui-text w="173">Modo de congelamiento gráfico activo</ui-text></div></div>
        <div class="bar"></div>
      </div>`;
    const body = this.shadowRoot.querySelector(".body");
    PALETTE.forEach((s) => {
      const el = document.createElement("palette-section");
      body.append(el);
      el.data = s;
    });
  }
}
customElements.define("pf-palette", PfPalette);

class PfTabs extends HTMLElement {
  connectedCallback() {
    const tabs = [["Grid", 20, 57], ["Voltage Magnitudes", 89, 125], ["Voltage Angles", 67, 105], ["Generators P  Q", 69, 107], ["Gráfico Tiempo-Sobrecorriente", 138, 176], ["Gráfico Tiempo-Sobrecorriente(1)", 150, 187]];
    this.attachShadow({ mode: "open" }).innerHTML = `
      <style>
        :host { display: flex; align-items: flex-end; height: 21px; background: #d9dada; border-bottom: 1px solid #b9b9b9; box-sizing: border-box; color: #333; }
        nav { width: 63px; height: 20px; display: flex; align-items: center; gap: 9px; padding-left: 5px; box-sizing: border-box; }
        .tab { height: 18px; display: flex; align-items: center; justify-content: space-between; padding: 0 5px 0 11px; box-sizing: border-box; border-right: 1px solid #bcbcbc; border-top: 1px solid #c8c8c8; flex: none; }
        .tab:nth-of-type(1) { background: #f3f3f3; height: 20px; font-weight: 700; color: #000; padding-right: 7px; }
        .plus { margin: 0 0 5px 5px; }
        .dim { color: #8a8a8a; }
      </style>
      <nav><pf-icon name="down" size="11"></pf-icon><pf-icon name="back" size="11"></pf-icon><pf-icon name="fwd" size="11" class="dim"></pf-icon></nav>
      ${tabs.map(([t, w, full]) => `<div class="tab" style="width:${full}px"><ui-text w="${w}">${t}</ui-text><pf-icon name="close" size="9" sw="2"></pf-icon></div>`).join("")}
      <pf-icon name="add" size="10" class="plus"></pf-icon>`;
  }
}
customElements.define("pf-tabs", PfTabs);

class PfViewbar extends HTMLElement {
  connectedCallback() {
    const combo = (t, w, full, left, cls = "") => `<div class="combo ${cls}" style="width:${full}px;margin-left:${left}px"><ui-text w="${w}">${t}</ui-text><pf-icon name="down" size="7"></pf-icon></div>`;
    this.attachShadow({ mode: "open" }).innerHTML = `
      <style>
        :host { display: flex; align-items: center; height: 20px; background: #f0f0f0; color: #454c50; }
        i { width: 1px; height: 15px; background: #d8d8d8; flex: none; }
        .on { background: #cde6f7; box-shadow: 0 0 0 2px #cde6f7; }
        .off { color: #999; }
        .combo { height: 16px; background: #fff; border-bottom: 1px solid #bbb; box-sizing: border-box; padding: 0 4px 0 3px; display: flex; align-items: center; justify-content: space-between; color: #222; flex: none; }
        .dis { color: #9b9b9b; background: #f7f7f7; border-color: #ddd; }
        .dis pf-icon { color: #ccc; }
      </style>
      ${strip([["lock", 301, "on"], ["reload", 318], ["mag", 341], ["hand", 359.5], ["fit", 377]], 13, 290, 1.4)}
      ${combo("125%", 23, 52, 4.5)}
      ${strip([["star", 449], ["binoc", 468, "on"], ["map", 485], ["select", 508, "on"], ["lasso", 526], ["sliders", 548], ["docs", 567, "off"], ["layers", 585], ["square", 602], ["num", 621, "on"], ["palette", 643], ["thermo", 661]], 13, 440, 1.4)}
      ${combo("345 kV", 30, 55, 8, "dis")}${combo("ABC", 19, 54, 4, "dis")}
      ${strip([["exportsm", 804], ["printer", 822], ["|", 834], ["net", 846]], 13, 788.5, 1.4)}`;
  }
}
customElements.define("pf-viewbar", PfViewbar);

// Single line diagram, drawn in window coordinates
class GridDiagram extends HTMLElement {
  connectedCallback() {
    const t = (x, y, s, w, cls = "v") => `<text class="${cls}" x="${x}" y="${y + 3}" textLength="${w}" lengthAdjust="spacingAndGlyphs">${s}</text>`;
    const vals = (x, y, list) => list.map((s, i) => t(x, y + i * 7.6, s, s.length * 4.55 - (s.includes(".") ? 2 : 0) + (s[0] === "-" ? -1 : 0.5))).join("");
    const rot = (x, y1, y2, s) => `<text class="r" transform="translate(${x + 3.5} ${y2}) rotate(-90)" textLength="${y2 - y1}" lengthAdjust="spacingAndGlyphs">${s}</text>`;
    const line = (x, a, b) => `<path d="M${x} ${a}V${b}" class="l"/>`;
    const sq = (x, y, c = "#000") => `<rect x="${x - 3.5}" y="${y - 3.5}" width="7" height="7" fill="${c}"/>`;
    const dot = (x, y, c = "#000") => `<circle cx="${x}" cy="${y}" r="3.600" fill="${c}"/>`;
    const tri = (x, y, h) => `<path d="M${x - 6.5} ${y}h13l-6.500 ${h}z" fill="#fff" stroke="#333"/>`;
    const bus = (x1, x2, y) => `<path d="M${x1} ${y}H${x2}" stroke="#1fc421" stroke-width="2"/>`;
    this.attachShadow({ mode: "open" }).innerHTML = `
      <style>
        :host { display: block; width: 976px; height: 539px; background: #fff; position: relative; overflow: hidden; }
        svg { display: block; font-family: "Liberation Sans", Arial, sans-serif; fill: #222; }
        .v { font-size: 8.500px; text-anchor: middle; }
        .n { font-size: 10px; text-anchor: middle; }
        .r { font-size: 9.500px; }
        .b { font-size: 12px; fill: #35cd35; }
        .l { stroke: #3a3a3a; stroke-width: 1; fill: none; }
        .g { fill: none; stroke: #67d367; }
        .find { position: absolute; left: 7px; top: 7px; width: 168px; height: 27px; box-sizing: border-box; border: 1px solid #999; background: rgba(255,255,255,.5); display: flex; align-items: center; padding: 0 2px 0 8px; gap: 6px; color: #555; }
        .find ui-text { font-style: italic; font-family: "Liberation Sans", sans-serif; color: #8b8b8b; }
        .find .x { margin: 0 0 12px auto; }
      </style>
      <svg width="976" height="539" viewBox="290 106 976 539">
        <path d="M290 124H496" stroke="#98d222" stroke-width="2"/>
        ${line(326.5, 106, 144)}${line(453.5, 106, 144)}
        ${sq(326.5, 112)}${sq(453, 112)}${dot(326.5, 124)}${dot(453, 124)}${sq(326.5, 134)}${sq(453, 134)}
        ${vals(326, 149, ["1104.0", "250.0", "1.839"])}${vals(453, 149, ["20.2", "-57.1", "0.098"])}
        ${line(326.5, 171, 203)}${tri(326, 203.5, 14)}${t(325.5, 229, "Load 39", 35, "n")}
        ${line(453.5, 171, 645)}${rot(432, 457, 508, "Line 09 - 39")}${rot(441, 473, 491, "11.8")}
        ${line(621.5, 440, 645)}${dot(621.5, 460, "#4693dc")}${rot(599, 436, 487, "Line 05 - 08")}${rot(607, 452, 470, "54.1")}
        ${vals(853, 107.5, ["-137.0", "-8.4", "0.229"])}${line(853.5, 129, 182)}${vals(854, 188.5, ["137.1", "-2.8", "0.228"])}${line(853.5, 209, 220)}
        ${rot(831, 130, 180, "Line 04 - 05")}${rot(839.5, 147, 165, "22.9")}
        ${rot(831, 415, 466, "Line 05 - 06")}${vals(853, 462.5, ["-419.5", "-86.0", "0.719"])}
        ${line(853.5, 483, 523)}${bus(684, 897, 503.3)}${sq(853.5, 492.5)}${dot(853.5, 503.5)}${sq(853.5, 513.5)}
        ${vals(853, 529.5, ["233.8", "84.0", "0.417"])}${line(853.5, 551, 582)}${tri(853.5, 582.5, 15.5)}${t(853, 608.5, "Load 07", 34, "n")}
        <text class="b" x="642" y="505" textLength="39.500">Bus 07</text><rect class="g" x="684.500" y="504.500" width="35" height="26"/>${vals(702, 509.3, ["344.0", "1.00", "-10.1"])}
        ${dot(748.5, 503.5)}${line(748.5, 504, 523)}${sq(748.5, 513.5)}${vals(748, 529.5, ["185.7", "2.0", "0.312"])}${line(748.5, 551, 645)}
        ${rot(726, 573, 624, "Line 07 - 08")}${rot(734.5, 589, 608, "31.2")}
        ${bus(880, 1235, 377)}${dot(1043.5, 377)}${dot(1212.5, 377)}${line(1043.5, 378, 397)}${line(1212.5, 378, 397)}${sq(1043.5, 387)}${sq(1212.5, 387)}
        ${vals(1043, 402.5, ["-511.6", "-116.1", "0.871"])}${vals(1212, 402.5, ["-363.8", "-32.4", "0.607"])}
        ${line(1043.5, 424, 536)}${line(1043.5, 576, 645)}${line(1212.5, 424, 540)}
        <g fill="none" stroke="#333"><circle cx="1043.500" cy="548.500" r="12.500"/><circle cx="1043.500" cy="563.500" r="12.500"/><path d="M1040 543l3.500 3 3.500-3M1043.500 546v4M1040 570l3.500-3 3.500 3M1043.500 567v-4M1043 546h-8V534M1031 534.500h8M1032.500 532.500h5M1034 530.500h2"/></g>
        ${rot(1005.5, 534, 577, "Trf 06 - 31")}${rot(1014, 547, 566, "79.6")}
        ${rot(1189.5, 457, 507, "Line 06 - 11")}${rot(1198.5, 474, 492, "60.7")}
        ${vals(1212, 547.5, ["364.8", "29.0", "0.605"])}${line(1212.5, 567, 587)}${bus(1170, 1266, 587.5)}${sq(1212.5, 577)}${dot(1212.5, 587.5)}
        <text class="b" x="1129.500" y="589" textLength="39">Bus 11</text><rect class="g" x="1170.500" y="588.500" width="34.500" height="26"/>${vals(1187, 594, ["349.4", "1.01", "-6.3"])}
        <text class="b" x="1254" y="357" textLength="39">Bus 06</text>
        <path d="M906 151l8 2.500-2.500 1 3.500 4-1.500 1-3-4-2 1.500z" fill="#333"/><path d="M917 155c2-3 7-3 8.500 0s0 11-4 12-4-3-5-6z" fill="#d6a28a"/><path d="M918 157l5-3M919 160l5-3" stroke="#c08a73"/>
      </svg>
      <div class="find"><pf-icon name="binoc" size="14"></pf-icon><ui-text w="98">Buscar en el diagrama</ui-text><pf-icon name="thinx" size="7" class="x"></pf-icon></div>`;
  }
}
customElements.define("grid-diagram", GridDiagram);

class DeviceDialog extends HTMLElement {
  connectedCallback() {
    const tools = [["refresh", 391], ["|", 406], ["newdoc", 420.5], ["pencil", 444.5], ["trash", 469], ["cut", 493.5], ["copy", 518], ["copytable", 543], ["paste", 568], ["|", 582], ["glasses", 597], ["tablegreen", 622], ["tablegray", 646.5, "mid"], ["|", 661], ["funnel", 676], ["funnelwarn", 701], ["funnelclock", 726], ["users", 750], ["|", 765], ["export", 780]];
    const tick = `<path d="M17 8l2 2 4-4" stroke="#7a9a80"/>`;
    const relay = `<rect x="4" y="7" width="11" height="6" stroke="#6bb544"/><path d="M9.500 7V3.500M5 3.500h9" stroke="#6bb544"/>${tick}`;
    const ct = `<circle cx="9.500" cy="8" r="4.500" stroke="#7cab78"/><path d="M9.500 2v12M14 8h2" stroke="#7cab78"/>${tick}`;
    const sw = `<path d="M3 10h5l6-4" stroke="#8a7d5c"/><path d="M11 9l3 3M14 9l-3 3" stroke="#d23b3b"/>${tick}`;
    const row = (icon, name, w, tipo, tw, check, cls = "") => `<div class="tr ${cls}"><div><span class="cur"></span><svg width="24" height="16" viewBox="0 0 24 16">${icon}</svg></div><div><ui-text w="${w}">${name}</ui-text></div><div>${tipo ? `<ui-text w="${tw}">${tipo}</ui-text>` : ""}</div><div>${check ? '<span class="chk"></span>' : ""}</div></div>`;
    this.attachShadow({ mode: "open" }).innerHTML = `
      <style>
        :host { display: flex; flex-direction: column; width: 526px; height: 246px; box-sizing: border-box; background: #f0f0f0; border: 1px solid #cfcfcf; border-radius: 7px 7px 3px 3px; box-shadow: 0 2px 8px rgba(0,0,0,.16); color: #222; overflow: hidden; }
        .title { height: 25px; flex: none; display: flex; align-items: center; padding: 0 9px 0 6px; gap: 4px; background: #f3f3f3; }
        .title .x { margin-left: auto; }
        .main { display: flex; height: 203px; flex: none; }
        .left { width: 440px; }
        .bar { height: 26px; display: flex; align-items: center; background: #f2f2f2; color: #5c6265; }
        .bar i { width: 1px; height: 20px; background: #ddd; flex: none; }
        .mid { color: #85898b; }
        .grid { height: 175px; background: #fff; border: 1px solid #999; border-left-color: #bbb; overflow: hidden; width: 439px; margin-left: -1px; }
        .th, .tr { display: grid; grid-template-columns: 37px 184px 137px 82px; }
        .th { height: 33px; background: #f5f5f5; }
        .th div { display: flex; flex-direction: column; align-items: center; padding-top: 3px; box-sizing: border-box; border-right: 1px solid #e0e0e0; border-bottom: 1px solid #ddd; height: 33px; }
        .th pf-icon { align-self: flex-end; margin: 2px 5px 0 0; }
        .th div:first-child pf-icon { margin-top: 17px; margin-right: 4px; }
        .th div:last-child { align-items: flex-start; padding-left: 12px; border-right: 0; }
        .tr { height: 20px; }
        .tr div { display: flex; align-items: center; border-right: 1px solid #e2e2e2; border-bottom: 1px solid #e2e2e2; box-sizing: border-box; padding-left: 2px; height: 20px; }
        .tr div:first-child { padding-left: 0; }
        .tr svg { fill: none; stroke-width: 1.300; flex: none; }
        .sel { background: #e6ebef; }
        .cur { width: 0; border-left: 5px solid transparent; border-top: 4px solid transparent; border-bottom: 4px solid transparent; margin: 0 2px 0 5px; flex: none; }
        .sel .cur { border-left-color: #66727c; }
        .chk { width: 8px; height: 8px; border: 1px solid #888; border-radius: 2px; background: #fafafa; margin: 0 0 1px 1px; }
        .side { padding: 7px 0 0 8px; }
        .btn { width: 68px; height: 23px; box-sizing: border-box; background: #fdfdfd; border: 1px solid #d6d6d6; border-radius: 3px; display: flex; align-items: center; justify-content: center; }
        .foot { flex: 1; display: flex; align-items: center; color: #333; }
        .foot ui-text { margin-left: 8px; }
        .size { width: 8px; height: 8px; margin: 6px 0 0 8px; background: radial-gradient(#aaa 0.8px, transparent 1.1px) 0 0 / 3px 3px; clip-path: polygon(100% 0, 100% 100%, 0 100%); }
      </style>
      <div class="title"><pf-icon name="form" size="13" sw="1.600"></pf-icon><ui-text w="173">Editar Dispositivos - Grid\\Bus 05\\Cub_1</ui-text><pf-icon name="thinx" size="9" class="x"></pf-icon></div>
      <div class="main">
        <div class="left">
          <div class="bar">${strip(tools, 18, 378, 1.3)}</div>
          <div class="grid">
            <div class="th"><div><pf-icon name="down" size="7"></pf-icon></div><div><ui-text w="37">Nombre</ui-text><pf-icon name="down" size="7"></pf-icon></div><div><ui-text w="20">Tipo</ui-text><pf-icon name="down" size="7"></pf-icon></div><div><ui-text w="68">Fuera de servici</ui-text></div></div>
            ${row(relay, "Modelo del Relé", 73, "7SJ6005-xxAx0-0DA0", 94, true)}
            ${row(ct, "Transformador de corriente", 120, "Tipo de transformador de c...", 128, true, "sel")}
            ${row(sw, "Switch", 29, "", 0, false)}
          </div>
        </div>
        <div class="side"><div class="btn"><ui-text w="27">Cerrar</ui-text></div></div>
      </div>
      <div class="foot"><ui-text w="18" style="margin-left:200px">Ln 2</ui-text><ui-text w="70" style="margin-left:29px">3 objeto(s) de 3</ui-text><ui-text w="119" style="margin-left:4px">1 objeto(s) seleccionado(s)</ui-text><ui-text w="58">Drag &amp; Drop</ui-text><span class="size"></span></div>`;
  }
}
customElements.define("device-dialog", DeviceDialog);

class PfStatus extends HTMLElement {
  connectedCallback() {
    this.attachShadow({ mode: "open" }).innerHTML = `
      <style>
        :host { display: flex; height: 20px; background: #f0f0f0; color: #333; }
        .msg { width: 623px; justify-content: flex-start; padding-left: 3px; border: 0; }
        div { display: flex; align-items: center; justify-content: center; border-right: 1px solid #dcdcdc; box-sizing: border-box; height: 20px; flex: none; }
        div:last-child { border: 0; }
        .lamp { width: 38px; height: 13px; border-radius: 7px; background: #4a5653; display: flex; align-items: center; justify-content: center; gap: 2px; margin-left: 7px; }
        .lamp b { width: 10px; height: 10px; border-radius: 50%; background: #8e9494; }
        .lamp b:first-child { background: #55e312; }
      </style>
      <div class="msg"><ui-text>P</ui-text></div>
      <div style="width:102px"><ui-text w="19">Grid</ui-text></div>
      <div style="width:31px"><ui-text w="20">Orto</ui-text></div>
      <div style="width:43px"><ui-text w="32">Encajar</ui-text></div>
      <div style="width:164px"><ui-text w="13">X=</ui-text><ui-text w="48" style="margin-left:11px">100.562,Y=</ui-text><ui-text w="33" style="margin-left:11px">168.225</ui-text></div>
      <div style="width:51px"><ui-text w="37">DB 5100</ui-text></div>
      <div style="width:104px"><ui-text w="90">28/05/2014 03:00:00</ui-text></div>
      <div style="width:110px"></div>
      <div><span class="lamp"><b></b><b></b><b></b></span></div>`;
  }
}
customElements.define("pf-status", PfStatus);

class WinTaskbar extends HTMLElement {
  connectedCallback() {
    // 22x22 drawings: [svg, running marker]
    const apps = [
      [`<path d="M6 3h5l3 6-4 10H5C2 19 2 17 3 14z" fill="#28a8d8"/><path d="M12 3h4c3 0 4 3 3 6l-2 6-5-1z" fill="#c063d4"/><path d="M4 11l7-3 3 6-3 4H5z" fill="#74c36c"/><rect x="7" y="12" width="14" height="8" rx="1.500" fill="#f7c51e"/><text x="14" y="18.500" font-size="6.500" font-weight="700" text-anchor="middle" textLength="11.500" fill="#222">PRE</text>`],
      [`<rect x="7" y="1" width="14" height="14" fill="#fff"/><rect x="1" y="6" width="14" height="14" fill="#85888d" opacity=".9"/>`],
      [`<path d="M5 17a5 5 0 0 1 0-9 6 6 0 0 1 11-1 5 5 0 0 1 1 10z" fill="#b9cdf2"/><path d="M4 17a4 4 0 0 1 2-6c4 0 8 3 12 6z" fill="#dbe6fb"/><circle cx="17" cy="3.500" r="6.300" fill="#f08ca0"/><text x="17" y="7" font-size="9.500" text-anchor="middle" fill="#222">1</text>`],
      [`<circle cx="11" cy="11" r="9.500" fill="#1a1a1d" stroke="#d5d5d5"/><path d="M11 10c-1-4 0-6 2-7M11 11c3 0 6 2 6 6M11 12c-3 2-6 1-7-1" stroke="#ddd" stroke-width="2" fill="none"/><circle cx="11" cy="11" r="2" fill="#ddd"/><circle cx="18" cy="2.500" r="4.800" fill="#fb0d0d"/>`, 1],
      [`<circle cx="11" cy="11" r="10" fill="#e3402f"/><path d="M11 11L2.300 6A10 10 0 0 0 10 21z" fill="#36a853"/><path d="M11 11l-1 10a10 10 0 0 0 10.500-13z" fill="#fbc518"/><circle cx="11" cy="11" r="4.800" fill="#fff"/><circle cx="11" cy="11" r="3.700" fill="#3b7de8"/><circle cx="17.500" cy="3" r="6.500" fill="#5c4037"/><text x="17.500" y="6" font-size="8" text-anchor="middle" fill="#ddd">L</text>`, 1],
      [`<path d="M6 1h10l4 5-2 10-7 6-7-6L2 6z" fill="#f4502a"/><path d="M6 5l5 1 5-1 2 3-3 5-4 4-4-4-3-5z" fill="#fff"/><path d="M7 8l3 2-1 3M15 8l-3 2 1 3M9 13l2 1.500 2-1.500" stroke="#f4502a" fill="none"/>`, 1],
      [`<rect x="10" y="3" width="11" height="15" fill="#f3f6fb" stroke="#9eb5db"/><path d="M13 6h6M13 9h6M13 12h6M13 15h6" stroke="#2b579a"/><path d="M1 3l12-2v19L1 18z" fill="#2a5699"/><text x="7" y="14" font-size="9" font-weight="700" text-anchor="middle" fill="#fff">W</text>`],
      [`<circle cx="11" cy="10.500" r="9" fill="#1b2b4b" stroke="#35d366" stroke-width="2.400"/><path d="M3 13l-2 8 8-2z" fill="#35d366"/><path d="M7 6c-1 3 3 9 8 9l1-3-3-1-1 1-3-3 1-1-1-3z" fill="#35d366"/>`, 1],
      [`<path d="M1 2h7l2 3h11v4H1z" fill="#e5a823"/><rect x="1" y="6" width="20" height="14" rx="1" fill="#fbd45c"/><path d="M5 15h12v5H5z" fill="#2776c5"/><path d="M8 17h6v3H8z" fill="#62b1ee"/>`, 1],
      [`<circle cx="11" cy="11" r="10" fill="#1785cf"/><path d="M2 9C4-2 21-2 21 10c0 5-7 5-7 2 2-3-1-6-5-5-5 1-7 4-7 2z" fill="#4bd0ab"/><path d="M8 10c-3 5 2 11 9 8-4 5-14 3-14-4 0-5 6-7 9-3-2-2-3-2-4-1z" fill="#0d57a7"/>`, 1],
      [`<svg x="1" y="0" width="20" height="21" viewBox="0 0 20 20">${pfLogo}</svg>`, 2],
      [`<rect x="9" y="3" width="12" height="15" fill="#f7dfd8" stroke="#d24726"/><path d="M15 6h4M15 9h4M13 13h6M13 16h6" stroke="#d24726" stroke-width="1.500"/><path d="M1 3l12-2v19L1 18z" fill="#d24726"/><text x="7" y="14.500" font-size="10" font-weight="700" text-anchor="middle" fill="#fff">P</text>`, 1]
    ];
    this.attachShadow({ mode: "open" }).innerHTML = `
      <style>
        :host { display: flex; align-items: center; height: 40px; background: linear-gradient(90deg, #20262d 0, #1c2333 17%, #17214a 33%, #0e2152 48%, #101b42 58%, #181e2b 76%, #1c2023 100%); color: #f3f3f3; }
        .start { margin-left: 17px; display: grid; grid-template-columns: 9px 9px; gap: 1px; }
        .start b { height: 9px; background: linear-gradient(135deg, #85d9fb, #2aa9ee); }
        .search { margin-left: 12px; width: 183px; height: 27px; border-radius: 14px; background: #3a414c; border: 1px solid #484f59; box-sizing: border-box; display: flex; align-items: center; padding-left: 9px; }
        .search ui-text { margin: 0 76px 0 8px; color: #e8e8e8; }
        .apps { display: flex; margin-left: 2px; }
        .app { width: 36.700px; height: 36px; display: flex; flex-direction: column; align-items: center; justify-content: flex-end; border-radius: 4px; }
        .app.a { background: rgba(255,255,255,.08); box-shadow: inset 0 0 0 1px rgba(255,255,255,.05); }
        .app svg { overflow: visible; font-family: "Liberation Sans", sans-serif; margin-bottom: 4px; }
        .app span { width: 5px; height: 2px; border-radius: 1px; margin-bottom: 2px; background: transparent; }
        .app .m1 { background: #9aa0ab; }
        .app .m2 { background: #62c6f4; width: 13px; }
        .tray { margin-left: auto; display: flex; align-items: center; gap: 7px; padding-right: 17px; }
        .tray svg { fill: none; stroke: #eee; stroke-width: 1.400; }
        .time { display: flex; flex-direction: column; align-items: flex-end; margin-left: 6px; }
        .time ui-text { line-height: 14px; height: 14px; }
      </style>
      <div class="start"><b></b><b></b><b></b><b></b></div>
      <div class="search"><pf-icon name="mag" size="13" sw="2"></pf-icon><ui-text w="34">Buscar</ui-text>
        <svg width="38" height="25" viewBox="0 0 38 25"><path d="M2 22q17 4 33 0" stroke="#45a9bf" stroke-width="2" fill="none"/><path d="M7 21C7 10 5 2 11 2c5 0 6 5 9 9 5 1 7 4 10 5l1-6 2 3 3-3-1 6-4 6H8z" fill="#ad9285"/><path d="M12 17l-5 6h8l2-4zM23 19l4 4h4z" fill="#7b6157"/><path d="M9 8v7M12 8v7" stroke="#fff" stroke-width="1.200"/><circle cx="10" cy="4.500" r=".7" fill="#222"/><path d="M8 7h5" stroke="#d7bfb1" stroke-width="2"/></svg>
      </div>
      <div class="apps">${apps.map(([g, m = 0]) => `<div class="app ${m === 2 ? "a" : ""}"><svg width="21" height="21" viewBox="0 0 22 22">${g}</svg><span class="m${m}"></span></div>`).join("")}</div>
      <div class="tray">
        <svg width="10" height="8" viewBox="0 0 10 8" style="margin-right:10px"><path d="M1 6l4-4 4 4"/></svg>
        <svg width="10" height="14" viewBox="0 0 10 14" style="margin-right:9px"><rect x="3" y="1" width="4" height="8" rx="2" fill="#8fc9d2" stroke="#8fc9d2"/><path d="M1 6q0 5 4 5t4-5M5 11v3" stroke="#8fc9d2" stroke-width="1"/></svg>
        <ui-text w="16" style="margin-right:9px">ESP</ui-text>
        <svg width="13" height="12" viewBox="0 0 13 12"><path d="M1 5q5.500-6 11 0M3 7.500q3.500-4 7 0M5 9.500q1.500-1.500 3 0"/><circle cx="6.500" cy="10.500" r="1" fill="#eee"/></svg>
        <svg width="12" height="12" viewBox="0 0 12 12"><path d="M1 4.500h2L6 2v8L3 7.500H1zM8 4q1.500 2 0 4M10 2q3 4 0 8" stroke-width="1"/></svg>
        <svg width="14" height="12" viewBox="0 0 14 12"><rect x="2" y="3" width="10" height="7" fill="#eee"/><path d="M13.500 5v3M2 1v9M5 0v3" /><path d="M3 8q3 1 3-3" stroke="#333"/></svg>
        <div class="time"><ui-text w="25">23:43</ui-text><ui-text w="51">30/09/2024</ui-text></div>
        <svg width="12" height="14" viewBox="0 0 12 14"><path d="M1 10l1-2V5q0-3 4-3 3 0 4 3v3l1 2z" fill="#eee"/><path d="M4 12h4" /><path d="M6 4h3L6 7h3M9 1h2L9 3h2" stroke="#333" stroke-width="1"/></svg>
      </div>`;
  }
}
customElements.define("win-taskbar", WinTaskbar);

class PfWindow extends HTMLElement {
  connectedCallback() {
    this.attachShadow({ mode: "open" }).innerHTML = `
      <style>
        :host { display: flex; flex-direction: column; width: 1280px; height: 720px; position: relative; overflow: hidden; background: #f0f0f0; }
        .work { display: flex; height: 595px; flex: none; }
        .view { width: 990px; margin-left: 2px; display: flex; flex-direction: column; }
        .canvas { display: flex; height: 539px; }
        .v { width: 4px; height: 132px; background: #858585; margin: 286px 0 0 5px; }
        .h { width: 245px; height: 4px; background: #858585; margin: 6px 0 0 166px; }
        device-dialog { position: absolute; left: 377px; top: 214px; }
        .mini { position: absolute; left: 5px; top: 658px; width: 122px; height: 22px; box-sizing: border-box; background: #f6f6f6; border: 1px solid #cdcdcd; border-radius: 6px; display: flex; align-items: center; padding-left: 6px; color: #888; }
        .mini .faint { color: #ddd; margin-left: 28px; }
        .mini .x { margin-left: 34px; }
      </style>
      <pf-titlebar></pf-titlebar>
      <pf-toolbar></pf-toolbar>
      <div class="work">
        <pf-palette></pf-palette>
        <div class="view">
          <pf-tabs></pf-tabs>
          <pf-viewbar></pf-viewbar>
          <div class="canvas"><grid-diagram></grid-diagram><div class="v"></div></div>
          <div class="h"></div>
        </div>
      </div>
      <pf-status></pf-status>
      <win-taskbar></win-taskbar>
      <device-dialog></device-dialog>
      <div class="mini"><pf-icon name="pf" size="14"></pf-icon><pf-icon name="restore" size="9" sw="2"></pf-icon><pf-icon name="restore" size="9" class="faint"></pf-icon><pf-icon name="thinx" size="8" class="x"></pf-icon></div>`;
  }
}
customElements.define("pf-window", PfWindow);
</script>
</body>
</html>
